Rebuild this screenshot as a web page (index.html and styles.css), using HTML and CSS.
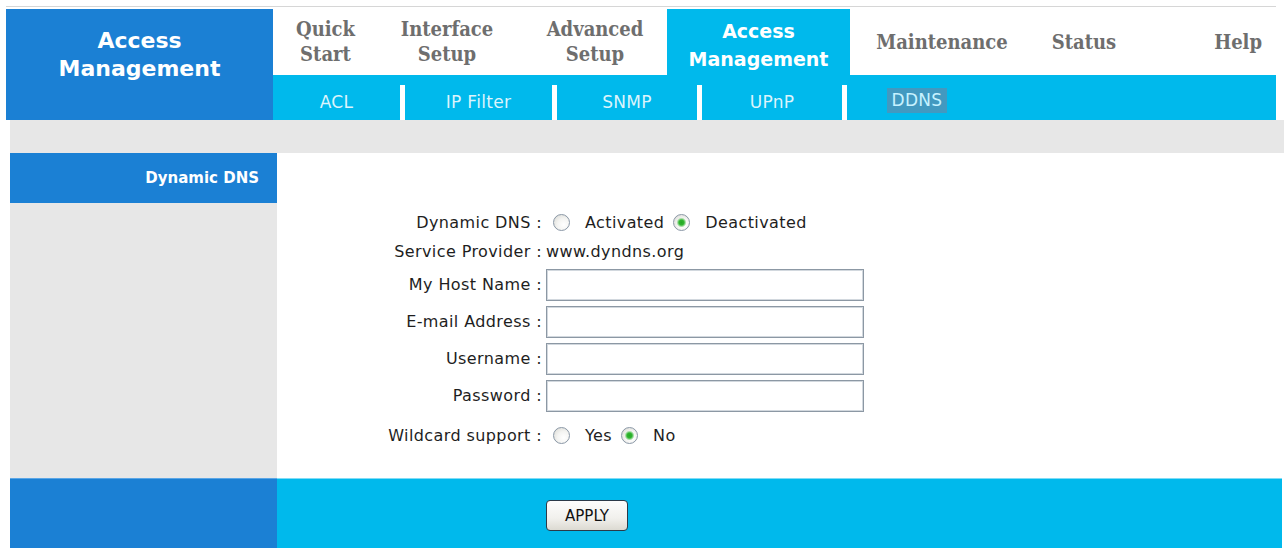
FILE: index.html
```html
<!DOCTYPE html>
<html>
<head>
<meta charset="utf-8">
<title>Access Management - Dynamic DNS</title>
<link rel="stylesheet" href="styles.css">
</head>
<body>
<div class="page">
  <div class="topline"></div>
  <header class="header">
    <div class="logo">Access<br>Management</div>
    <div class="navwrap">
      <nav class="mainnav">
        <div class="tab t-quick">Quick<br>Start</div>
        <div class="tab t-iface">Interface<br>Setup</div>
        <div class="tab t-adv">Advanced<br>Setup</div>
        <div class="tab t-active">Access<br>Management</div>
        <div class="tab t-maint">Maintenance</div>
        <div class="tab t-status">Status</div>
        <div class="tab t-help">Help</div>
      </nav>
      <nav class="subnav">
        <div class="sub s-acl">ACL</div>
        <div class="sep"></div>
        <div class="sub s-ip">IP Filter</div>
        <div class="sep"></div>
        <div class="sub s-std">SNMP</div>
        <div class="sep"></div>
        <div class="sub s-std">UPnP</div>
        <div class="sep"></div>
        <div class="sub s-std"><span class="sub-sel">DDNS</span></div>
      </nav>
    </div>
  </header>
  <div class="band"></div>
  <main class="content">
    <aside class="side">
      <div class="side-title">Dynamic DNS</div>
    </aside>
    <section class="form">
      <div class="row row-short">
        <div class="lbl">Dynamic DNS :</div>
        <div class="val radios">
          <input type="radio" class="rb" name="ddns">
          <span class="opt">Activated</span>
          <input type="radio" class="rb" name="ddns" checked>
          <span class="opt">Deactivated</span>
        </div>
      </div>
      <div class="row row-sp">
        <div class="lbl">Service Provider :</div>
        <div class="val">www.dyndns.org</div>
      </div>
      <div class="row row-input">
        <div class="lbl">My Host Name :</div>
        <div class="val"><input type="text" class="txt"></div>
      </div>
      <div class="row row-input">
        <div class="lbl">E-mail Address :</div>
        <div class="val"><input type="text" class="txt"></div>
      </div>
      <div class="row row-input">
        <div class="lbl">Username :</div>
        <div class="val"><input type="text" class="txt"></div>
      </div>
      <div class="row row-input">
        <div class="lbl">Password :</div>
        <div class="val"><input type="password" class="txt"></div>
      </div>
      <div class="row row-short row-wild">
        <div class="lbl">Wildcard support :</div>
        <div class="val radios">
          <input type="radio" class="rb" name="wild">
          <span class="opt">Yes</span>
          <input type="radio" class="rb" name="wild" checked>
          <span class="opt">No</span>
        </div>
      </div>
    </section>
  </main>
  <footer class="footbar">
    <div class="foot-left"></div>
    <div class="foot-right"><button class="apply" type="button">APPLY</button></div>
  </footer>
</div>
</body>
</html>
```

FILE: styles.css
```css
html, body {
  margin: 0;
  padding: 0;
  background: #ffffff;
}

.page {
  padding-top: 6px;
  font-family: "DejaVu Sans", Verdana, sans-serif;
}

.topline {
  margin-left: 6px;
  width: 1270px;
  height: 1px;
  background: #d6d6d6;
  margin-bottom: 2px;
}

.header {
  margin-left: 6px;
  width: 1270px;
  height: 111px;
  display: grid;
  grid-template-columns: 267px 1fr;
}

.logo {
  background: #1b80d4;
  color: #ffffff;
  font-family: "DejaVu Sans", Verdana, sans-serif;
  font-weight: bold;
  font-size: 22px;
  line-height: 28px;
  text-align: center;
  padding-top: 18px;
  box-sizing: border-box;
}

.navwrap {
  display: flex;
  flex-direction: column;
}

.mainnav {
  height: 66px;
  display: flex;
  background: #ffffff;
}

.tab {
  display: flex;
  align-items: center;
  justify-content: center;
  text-align: center;
  font-family: "DejaVu Serif Condensed", "DejaVu Serif", serif;
  font-stretch: condensed;
  font-weight: bold;
  font-size: 20px;
  line-height: 25px;
  color: #6e6e6e;
  box-sizing: border-box;
}

.t-quick { width: 105px; }
.t-iface { width: 138px; }
.t-adv { width: 151px; padding-left: 7px; }
.t-active {
  width: 183px;
  background: #00b9ec;
  color: #ffffff;
  font-family: "DejaVu Sans", Verdana, sans-serif;
  font-stretch: normal;
  font-size: 19px;
  line-height: 28px;
  padding-top: 5px;
}
.t-maint { width: 184px; }
.t-status { width: 100px; }
.t-help {
  flex: 1;
  justify-content: flex-end;
  padding-right: 14px;
}

.subnav {
  height: 45px;
  background: #00b9ec;
  display: flex;
  align-items: flex-end;
}

.sub {
  height: 35px;
  line-height: 35px;
  text-align: center;
  font-size: 17px;
  letter-spacing: 0.3px;
  color: #dcf4fc;
}

.s-acl { width: 127px; }
.s-ip { width: 147px; }
.s-std { width: 140px; }

.sep {
  width: 5px;
  height: 35px;
  background: #ffffff;
}

.sub-sel {
  display: inline-block;
  background: #4299c0;
  color: #c6f2ff;
  line-height: 25px;
  padding: 0 5px;
  margin-top: 3px;
  vertical-align: top;
}

.band {
  margin-left: 10px;
  width: 1274px;
  height: 33px;
  background: #e7e7e7;
}

.content {
  margin-left: 10px;
  width: 1272px;
  height: 325px;
  display: grid;
  grid-template-columns: 267px 1fr;
}

.side {
  background: #e7e7e7;
}

.side-title {
  height: 50px;
  line-height: 50px;
  background: #1b80d4;
  color: #ffffff;
  font-weight: bold;
  font-size: 15px;
  text-align: right;
  padding-right: 18px;
}

.form {
  padding-top: 55px;
  display: flex;
  flex-direction: column;
  font-size: 16px;
  letter-spacing: 0.4px;
  color: #1e1e1e;
}

.row {
  display: grid;
  grid-template-columns: 264px 1fr;
  column-gap: 5px;
  align-items: center;
}

.row-short { height: 28px; }
.row-sp { height: 30px; }
.row-input { height: 37px; }
.row-wild { margin-top: 7px; }

.lbl {
  text-align: right;
  white-space: nowrap;
  margin-right: -1px;
}

.val {
  white-space: nowrap;
}

.radios {
  display: flex;
  align-items: center;
}

.rb {
  -webkit-appearance: none;
  appearance: none;
  width: 17px;
  height: 17px;
  margin: 0 0 0 7px;
  border: 1px solid #8a97a6;
  border-radius: 50%;
  box-sizing: border-box;
  background: radial-gradient(circle at 65% 65%, #ffffff 0, #f4f4f2 45%, #d6d6d0 100%);
  flex: none;
}

.rb:checked {
  background:
    radial-gradient(circle, #23a823 0, #2fb52f 2.5px, #a9dea9 4px, rgba(255,255,255,0) 5px),
    radial-gradient(circle at 65% 65%, #ffffff 0, #f4f4f2 45%, #d6d6d0 100%);
}

.opt {
  margin-left: 15px;
  margin-right: 2px;
}

.txt {
  width: 318px;
  height: 32px;
  box-sizing: border-box;
  border: 1px solid #8c98a4;
  box-shadow: inset 0 0 0 1px #d2d8de;
  background: #ffffff;
  margin: 0;
  display: block;
}

.footbar {
  margin-left: 10px;
  width: 1272px;
  height: 70px;
  display: grid;
  grid-template-columns: 267px 1fr;
}

.foot-left {
  background: #1b80d4;
  border-top: 1px solid #5aa6e6;
}

.foot-right {
  background: #00b9ec;
  border-top: 1px solid #7fdcf6;
  padding-left: 269px;
  padding-top: 21px;
  box-sizing: border-box;
}

.apply {
  width: 82px;
  height: 31px;
  box-sizing: border-box;
  border: 1px solid #2c3a48;
  border-radius: 4px;
  background: linear-gradient(#fdfdfc, #f1f0ec 60%, #dcdad2);
  font-family: "DejaVu Sans", Verdana, sans-serif;
  font-size: 15px;
  color: #111111;
  padding: 0;
  margin: 0;
}
```
